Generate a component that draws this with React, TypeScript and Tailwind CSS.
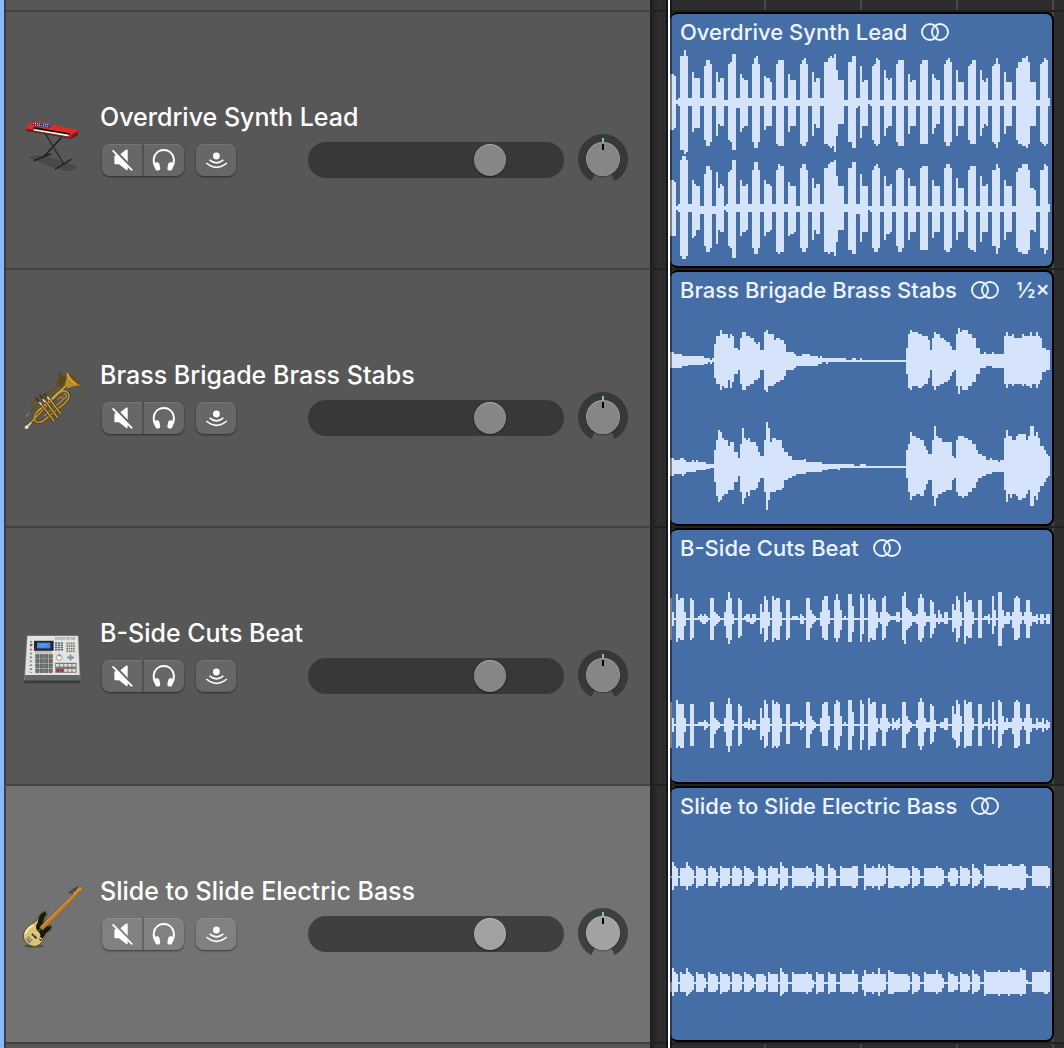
import { useState } from "react";
import type { ReactNode } from "react";

type Channel = { envelope: string; shift?: number };
type Track = {
  name: string;
  art: ReactNode;
  speed?: string;
  selected?: boolean;
  channels: Channel[];
};

/* Envelopes are lists of "column,up,down"; each entry holds until the next one. A column is 2 units wide. */
const SYNTH_L =
  "0,28,28 2,26,26 3,2,2 4,4,4 5,46,48 7,52,52 8,46,50 9,4,4 11,30,30 12,24,26 15,4,4 17,36,38 18,42,44 20,38,40 21,4,4 23,30,34 24,20,22 25,24,24 27,2,4 29,38,38 30,40,40 31,48,48 33,4,6 35,28,30 36,24,26 37,22,24 39,4,4 41,38,40 42,44,46 43,46,46 44,38,40 45,4,4 47,26,28 48,24,24 50,20,24 51,2,4 53,38,42 54,42,44 57,4,4 59,28,30 60,22,24 63,2,4 65,38,42 66,42,44 67,44,44 68,38,40 69,4,4 71,30,34 72,20,22 73,24,26 75,4,4 77,40,42 79,44,44 80,46,46 81,44,44 82,48,50 83,32,34 84,22,22 87,2,4 89,40,40 91,46,46 93,4,6 94,4,4 95,36,36 96,20,24 97,22,24 99,2,2 100,2,4 101,36,38 102,38,42 103,44,44 104,42,42 105,2,4 107,32,34 108,24,26 109,22,24 110,24,24 111,2,4 113,38,40 114,42,44 117,2,4 119,28,32 120,20,24 121,22,24 123,2,4 125,38,42 126,42,42 129,2,4 131,28,32 132,24,26 133,22,22 135,2,4 137,38,40 138,42,44 139,44,44 140,40,40 141,2,4 143,32,34 144,20,24 147,2,4 149,36,38 150,38,42 151,42,42 153,2,4 155,32,34 156,22,26 157,20,22 158,24,24 159,2,4 161,36,40 162,38,42 163,44,46 164,38,40 165,2,4 167,30,32 168,20,24 171,2,4 173,34,38 174,40,42 176,44,44 178,46,46 179,40,42 180,20,24 183,2,4 185,38,40 186,40,42 187,44,44 188,42,42 189,4,4";
const SYNTH_R =
  "0,28,28 2,26,28 3,2,2 4,4,4 5,48,48 6,52,51 8,48,48 9,4,4 11,28,30 12,24,28 13,22,22 15,2,6 17,34,38 18,42,44 20,38,40 21,2,6 23,36,36 24,20,22 25,24,24 26,22,24 27,2,2 28,4,4 29,36,38 30,38,40 31,48,50 33,4,4 35,28,28 36,22,24 38,24,22 39,4,4 41,38,40 42,46,46 44,38,40 45,4,4 47,28,28 48,24,24 50,22,22 51,4,4 53,38,44 54,44,46 55,42,44 57,4,4 59,26,28 60,22,26 62,22,24 63,2,4 65,40,40 66,44,44 68,38,40 69,4,4 71,30,32 72,20,22 73,24,26 75,4,4 77,40,44 79,44,46 80,46,44 82,48,48 83,32,34 84,22,22 87,4,4 89,40,42 91,46,46 93,4,6 95,34,34 96,22,24 99,2,2 100,2,4 101,38,40 102,42,44 103,44,44 104,40,40 105,2,4 107,32,32 108,22,26 110,24,24 111,2,4 113,38,38 114,40,44 116,38,40 117,2,4 119,30,32 120,22,24 123,2,4 125,40,42 126,42,42 129,2,4 131,28,30 132,22,24 135,2,4 137,40,42 138,44,44 140,40,40 141,2,4 143,30,32 144,20,24 147,2,2 148,2,4 149,38,40 150,42,42 152,42,44 153,2,4 155,32,34 156,22,24 158,24,24 159,2,4 161,38,38 163,44,46 164,40,40 165,2,4 167,28,32 168,22,24 171,2,4 173,36,40 174,40,44 176,44,46 179,38,42 180,20,22 182,18,24 183,2,4 185,38,40 187,44,46 188,42,42 189,4,4";
const BRASS_L =
  "0,9,7 2,7,7 6,5,5 9,5,4 17,3,3 19,3,1 20,1,3 21,3,1 22,17,17 23,25,23 25,31,29 26,27,25 27,27,27 29,23,19 30,27,27 31,25,21 32,13,13 34,11,9 35,23,23 36,29,29 38,25,25 40,23,23 42,19,19 43,17,19 44,19,17 45,11,9 47,29,29 48,31,31 49,27,25 52,21,23 53,23,21 55,21,19 57,17,15 58,9,9 62,7,7 63,5,5 66,7,5 70,5,5 74,3,3 75,5,3 76,3,1 78,3,3 79,3,1 88,1,1 91,3,1 93,1,1 95,3,1 96,1,1 118,13,13 119,27,27 120,31,29 121,29,25 124,27,27 126,25,25 127,25,23 129,21,17 130,11,9 131,23,25 132,29,29 133,27,25 135,23,23 137,21,21 138,19,21 139,19,19 140,15,15 141,11,11 142,11,9 143,27,25 144,33,33 145,29,25 146,31,29 149,27,25 151,23,21 153,13,13 155,7,7 157,9,7 158,7,5 161,9,7 162,7,7 167,25,23 168,29,27 169,25,23 171,27,25 172,23,23 176,27,25 177,25,23 178,25,25 180,29,27 181,25,23 183,29,27 184,25,23 185,23,19 186,13,11 188,11,9";
const BRASS_R =
  "0,9,9 2,7,7 5,9,7 6,9,9 7,7,7 8,5,5 11,7,5 12,5,5 13,7,3 14,5,3 17,5,3 18,3,2 20,3,1 22,17,15 23,27,29 24,37,35 25,35,33 26,29,29 27,27,27 29,21,23 30,25,23 32,15,15 34,9,9 35,23,25 36,39,37 37,29,31 38,27,25 39,29,29 40,25,23 43,21,21 44,15,15 45,11,11 47,27,25 48,45,43 49,39,33 50,25,25 51,29,25 53,27,23 55,27,23 56,19,21 57,15,13 59,11,11 61,7,9 63,7,7 67,8,7 68,5,5 76,3,3 79,3,2 84,3,3 85,3,1 92,1,1 95,3,1 98,1,1 118,17,11 119,23,25 120,35,33 121,31,29 123,29,27 125,27,29 127,21,23 128,17,17 129,13,13 131,27,29 132,41,39 133,31,31 134,29,27 136,25,25 138,25,23 141,11,13 142,9,11 143,27,25 144,31,29 146,31,31 147,29,29 149,27,25 151,23,21 153,17,15 154,13,11 156,11,9 158,7,7 160,9,7 161,7,5 164,5,5 165,7,5 167,29,23 168,37,35 169,31,27 170,31,31 171,27,27 173,31,29 174,33,33 176,33,31 178,27,27 179,31,23 180,41,39 182,31,29 183,35,33 184,29,25 185,21,19 187,17,15 188,13,11 189,11,9";
const BEAT_L =
  "0,21,21 1,7,7 2,1,1 3,25,23 4,19,19 5,21,21 7,7,7 8,1,1 10,21,21 11,19,19 12,1,1 14,3,1 15,5,3 16,3,5 17,5,5 18,3,3 19,1,1 20,21,21 22,7,7 23,5,5 24,3,3 25,1,1 27,7,7 28,19,19 29,27,25 30,21,21 31,5,5 32,1,1 34,21,19 35,19,17 36,1,1 37,3,1 38,5,3 40,1,5 41,5,5 42,5,3 43,1,1 45,15,15 46,7,9 47,23,23 48,19,21 49,7,7 50,1,1 51,23,23 52,19,19 53,21,21 55,7,7 56,1,1 58,19,21 59,19,19 60,1,1 61,3,1 64,1,1 65,5,5 66,3,5 67,1,1 68,21,21 70,9,9 71,5,5 72,3,3 73,1,1 75,7,7 76,19,19 77,23,21 79,9,5 80,1,1 82,19,19 83,25,23 84,19,19 85,9,11 86,1,1 87,3,1 88,1,1 89,25,23 91,13,13 92,1,1 95,25,23 96,21,15 97,1,1 99,25,23 100,19,19 101,21,21 102,19,21 103,7,9 104,1,3 105,7,5 106,21,21 107,23,19 108,7,7 109,5,3 110,3,1 113,7,3 115,1,1 116,23,21 117,27,25 118,11,11 119,9,9 120,7,7 121,3,3 123,5,5 124,21,21 125,25,23 126,21,19 127,7,7 128,3,3 130,19,19 131,17,15 132,5,9 133,1,3 134,9,5 135,5,3 136,1,3 137,7,5 139,1,1 141,15,13 142,9,9 143,23,23 144,19,19 145,7,7 146,1,1 147,27,25 148,17,17 149,19,19 151,7,5 152,1,1 154,19,19 156,1,1 157,3,1 159,5,5 160,1,1 161,23,15 162,9,7 163,1,1 164,27,27 166,9,9 167,3,5 168,7,5 170,3,1 171,7,9 172,21,21 173,23,21 174,21,19 175,7,5 176,3,1 177,7,5 178,19,19 180,7,7 181,3,3 183,5,5 184,1,1 185,5,5 187,1,1 188,5,5";
const BEAT_R =
  "0,23,23 1,7,7 2,1,1 3,25,23 4,21,21 5,21,23 7,7,7 8,1,1 10,21,21 12,1,1 14,3,1 17,5,5 18,3,3 19,1,1 20,23,23 22,7,9 23,5,5 24,3,3 25,1,1 27,7,7 28,21,21 29,27,27 30,21,21 31,5,5 32,1,1 34,21,21 35,19,19 36,1,1 37,3,3 39,7,5 40,1,3 41,5,5 43,1,1 45,17,15 46,7,11 47,25,23 48,21,21 49,7,7 50,1,1 51,25,23 52,21,21 53,23,23 54,21,21 55,7,7 56,1,1 58,21,19 60,1,1 61,3,1 64,1,1 65,5,5 66,3,3 67,1,1 68,23,23 70,9,9 71,5,5 72,3,3 73,1,1 75,7,7 76,21,21 77,23,21 79,9,5 80,1,1 82,21,23 83,25,25 84,23,21 85,9,11 86,1,1 87,3,1 88,1,1 89,25,25 91,13,11 92,1,1 95,25,25 96,21,15 97,1,1 99,27,25 100,21,21 101,23,21 103,7,7 104,1,3 105,7,5 106,21,21 108,7,7 109,3,3 110,1,1 111,7,5 112,3,3 113,5,5 114,7,3 115,1,1 116,23,23 118,9,9 119,5,7 120,3,3 121,1,1 123,5,3 124,23,21 125,27,25 126,23,21 127,7,7 128,3,3 130,21,19 131,19,17 132,5,7 133,1,1 135,3,3 137,7,5 139,1,1 141,19,13 142,11,15 143,25,23 144,21,21 145,9,7 146,1,1 147,25,23 148,21,21 149,23,21 151,7,5 152,1,1 154,21,21 156,1,3 157,3,1 159,7,5 160,1,1 161,23,19 162,5,5 163,1,1 164,25,23 165,23,21 166,9,9 167,3,5 168,7,5 169,3,3 171,7,9 172,23,23 173,25,23 174,23,21 175,7,5 176,3,1 177,7,5 178,21,19 180,7,7 181,1,3 183,7,5 184,3,3 186,7,7 187,1,3 188,5,5 189,3,3";
const BASS_L =
  "0,1,1 1,15,13 2,11,9 3,9,9 4,1,1 5,9,9 8,15,13 9,11,9 10,9,9 11,7,7 12,1,1 13,11,11 14,9,9 17,7,7 18,1,1 19,9,9 20,11,9 21,9,9 23,5,5 24,1,1 25,11,11 26,9,9 29,9,7 30,1,1 31,9,9 32,11,9 33,9,9 35,7,7 36,1,1 37,11,9 38,9,9 40,7,7 41,5,5 42,1,1 44,11,9 45,9,9 47,7,7 48,1,1 49,9,9 50,11,9 51,9,9 53,9,7 54,3,1 55,15,13 56,11,11 57,9,9 59,1,1 61,11,11 62,9,9 68,11,11 69,9,9 71,5,5 72,1,1 73,13,11 74,11,9 76,9,9 77,1,1 79,13,11 80,9,9 82,7,9 83,1,1 85,11,9 86,9,9 91,11,11 93,11,9 94,1,1 97,13,13 98,9,9 101,11,11 102,9,9 104,13,13 105,9,9 106,11,9 107,9,7 108,1,1 109,13,11 110,11,11 112,9,9 115,9,11 117,9,9 119,7,7 120,1,1 121,11,11 122,9,9 124,7,7 125,1,1 127,9,9 133,11,11 134,9,9 136,7,7 137,1,1 139,5,5 140,9,9 143,7,7 144,1,1 145,11,9 146,9,9 149,7,7 150,1,1 151,13,11 152,9,9 154,7,7 155,3,3 156,1,1 157,13,11 158,11,9 164,13,13 165,11,11 169,13,13 171,11,11 175,13,13 177,11,11 178,3,1 179,1,1 181,11,9 187,11,9 188,11,11 189,9,9";
const BASS_R =
  "0,1,9 1,15,13 2,11,9 3,9,9 4,1,1 5,11,9 6,9,9 8,15,13 9,11,11 10,9,9 11,7,7 12,1,1 13,11,9 14,9,9 17,5,5 18,1,1 19,11,9 20,9,9 23,7,7 24,1,1 25,11,11 26,9,9 29,7,7 30,1,1 31,11,9 32,9,9 35,7,7 36,1,1 37,11,9 38,9,9 40,7,7 41,5,5 42,1,1 43,9,9 47,7,7 48,1,1 49,11,9 50,9,9 54,1,1 55,15,13 56,11,11 57,9,9 59,1,1 61,11,9 62,9,9 68,11,11 69,9,9 71,3,5 72,1,1 73,11,11 74,9,9 77,1,1 79,11,11 80,9,9 83,1,1 85,11,9 86,9,9 91,13,11 92,9,9 94,1,1 96,7,7 97,13,13 98,9,9 101,11,11 102,9,9 104,15,13 105,9,9 107,9,7 108,1,1 109,13,11 110,11,11 112,9,9 119,7,7 120,1,1 121,11,11 122,9,9 124,7,7 125,1,1 127,11,9 128,9,9 133,13,11 134,9,9 136,5,5 137,1,1 139,11,9 140,9,9 142,7,7 144,1,1 145,11,9 146,9,9 149,7,7 150,1,1 151,13,11 152,9,9 154,7,7 155,1,1 157,13,13 158,11,11 164,13,13 165,11,11 169,13,13 170,11,11 175,15,13 176,13,11 178,3,1 179,1,1 181,11,9 187,13,11 188,11,11 189,11,9";

const COLUMNS = 190;
const MID = 53;

function envelopePath(envelope: string, shift: number) {
  const steps = envelope.split(" ").map((s) => s.split(",").map(Number));
  const mid = MID + shift;
  let top = `M0 ${mid}`;
  const bottom: string[] = [];
  steps.forEach(([col, up, down], i) => {
    const end = i + 1 < steps.length ? steps[i + 1][0] : COLUMNS;
    top += `V${mid - up}H${end * 2}`;
    bottom.unshift(`V${mid + down}H${col * 2}`);
  });
  return top + bottom.join("") + "Z";
}

function Waveform({ envelope, shift = 0 }: Channel) {
  return (
    <svg viewBox="0 0 380 106" className="block h-[106px] w-[380px]" shapeRendering="crispEdges" aria-hidden="true">
      <path d={envelopePath(envelope, shift)} fill="#d5e4fb" />
    </svg>
  );
}

function KeyboardArt() {
  return (
    <svg viewBox="0 0 62 62" className="size-[62px]" aria-hidden="true">
      <path d="M6 45Q18 41 28 45L55 54Q54 60 44 59Q26 55 6 45Z" fill="#464646" opacity=".8" />
      <g fill="none" stroke="#1d1d1d" strokeWidth="1.4" strokeLinecap="round">
        <path d="M23 21L41.5 51.5M39 26L21 45.5M12.5 48.5L28.5 42M33.5 57L49 47.5" />
      </g>
      <path d="M23.5 22L41 50" stroke="#555" strokeWidth=".4" />
      <path d="M3.6 16.2L8.8 10.2L22 10.4L56.6 18.6L56 22.3L49 26L4 18.3Z" fill="#e22a28" />
      <path d="M3.6 16.4L12 17.2L11 19.5L4 18.3Z" fill="#8d2030" />
      <path d="M49 22.8L56.6 18.6L56 22.3L49 26Z" fill="#97110f" />
      <path d="M9 10.5L30 12.2L28 15.6L13 14.4Z" fill="#3a3758" />
      <path d="M11 11.4L19 12M13 13.2L26 14.4M21 12L28 12.9" stroke="#b8c6ee" strokeWidth="1" strokeDasharray="1.2 .8" />
      <path d="M12.4 15L48 21.2L46.8 24.9L10.2 18.2Z" fill="#1a1010" />
      <path d="M12 17L47 22.8L46.5 24.4L10.8 18.2Z" fill="#fafafa" />
      <path d="M4 18.4L49 26.2L56 22.5" stroke="#42100f" strokeWidth=".8" fill="none" />
    </svg>
  );
}

function TrumpetArt() {
  return (
    <svg viewBox="0 0 62 62" className="size-[62px]" aria-hidden="true">
      <g fill="none" stroke="#655021" strokeLinecap="round">
        <path d="M5 45L40 12M11 40Q9 30 17 29L34 17" strokeWidth="1.8" />
        <path d="M14 28L21 37M18 25L25 34M22 24L29 31" strokeWidth="1.6" stroke="#3f331a" />
      </g>
      <path d="M37 1Q37 9 34 15L39 17Q43 12 48 9Q41 7 37 1Z" fill="#5b481d" />
      <path d="M4 46L7 43" stroke="#777" strokeWidth="1.6" strokeLinecap="round" />
      <g fill="none" strokeLinecap="round" strokeLinejoin="round">
        <path d="M46 14L15 42Q11 47 13 51Q16 54 21 51L43 33Q49 27 46 23Q42 19 37 23L6 55.5" stroke="#4f390d" strokeWidth="3" />
        <path d="M46 14L15 42Q11 47 13 51Q16 54 21 51L43 33Q49 27 46 23Q42 19 37 23L6 55.5" stroke="#c0922f" strokeWidth="1.7" />
        <path d="M45 15L17 40M42 23.5Q45 24 44.5 27L22 46" stroke="#ecd07a" strokeWidth=".6" />
        <path d="M34 36L40 30.5Q42 28 40.5 27Q39 26.5 36 29" stroke="#a97c25" strokeWidth="1.3" />
        <path d="M19 34L32 51M23.5 31L35.5 47.5M27.5 29L38.5 43.5" stroke="#4d390f" strokeWidth="3" />
        <path d="M19 34L32 51M23.5 31L35.5 47.5M27.5 29L38.5 43.5" stroke="#c29a40" strokeWidth="1.5" />
        <path d="M17.5 32.5L19 34M21.2 29.6L22.5 31.5M25.7 27.2L27 29" stroke="#dddad0" strokeWidth="1.6" />
      </g>
      <path d="M44.7.6Q45 8 42.5 15.2L46 18.5Q52.5 15.2 59.3 15.8Q50 10 44.7.6Z" fill="#b98a2b" stroke="#6b4c16" strokeWidth=".5" />
      <path d="M44.7.6Q48 10.5 59.3 15.8Q56 9.5 44.7.6Z" fill="#6c4e16" />
      <path d="M45.4 3Q47 10 54 14.4" stroke="#e6c263" strokeWidth="1" fill="none" />
      <path d="M4.8 57.2L8.6 53.2" stroke="#ddd3c2" strokeWidth="1.8" strokeLinecap="round" />
      <circle cx="4.6" cy="57.2" r="1.8" fill="#eee5da" />
    </svg>
  );
}

function SamplerArt() {
  const four = [0, 1, 2, 3];
  return (
    <svg viewBox="0 0 62 62" className="size-[62px]" aria-hidden="true">
      <path d="M2 52.5H58.5V55.5H2Z" fill="#333" opacity=".7" />
      <path d="M5 7.5H56.4L58.5 53.8H2Z" fill="#8c8f8e" />
      <path d="M5.4 8H56L57.4 47H3.2Z" fill="#e3e3df" />
      <path d="M3.2 47H57.4L58.5 53.8H2Z" fill="#626766" />
      <path d="M2.2 53.2H58.3" stroke="#222" strokeWidth="1" />
      <rect x="12" y="12.8" width="19.6" height="10" fill="#25272b" />
      <rect x="15" y="14.6" width="13.4" height="5.8" fill="#3a84ee" />
      <path d="M16.5 16.5H26M16.5 18.4H24" stroke="#75b2ff" strokeWidth=".7" />
      <g fill="#fff" stroke="#8b8b87" strokeWidth=".6">
        {[0, 1, 2, 3, 4].map((i) => (
          <rect key={i} x={13.5 + i * 3.4} y="23.8" width="2.3" height="1.2" />
        ))}
      </g>
      <rect x="13" y="25.8" width="18" height="19.8" fill="#d2d3cf" />
      <g fill="#707474" stroke="#4c5052" strokeWidth=".5">
        {four.map((r) => four.map((c) => <rect key={`${r}${c}`} x={13.8 + c * 4.4} y={26.6 + r * 4.8} width="3.3" height="3.7" />))}
      </g>
      <g fill="#c9c9c5" stroke="#92928e" strokeWidth=".4">
        {four.map((c) => (
          <rect key={c} x={33.5 + c * 5.2} y="9.4" width="3.8" height="2.2" />
        ))}
      </g>
      <g fill="#50648f">
        {four.map((r) => [0, 1, 2].map((c) => <rect key={`${r}${c}`} x={33 + c * 2.9} y={14.4 + r * 2.2} width="2.2" height="1.5" />))}
      </g>
      <g fill="#70736f">
        {four.map((r) => four.map((c) => <rect key={`${r}${c}`} x={44.5 + c * 2.2} y={14.6 + r * 2.6} width="1.5" height="1.7" />))}
      </g>
      <circle cx="37.2" cy="29.6" r="2.8" fill="#fafafa" stroke="#888" strokeWidth=".8" />
      <path d="M37.2 28.6V26.4" stroke="#333" strokeWidth=".8" />
      <path d="M48.5 26.6V32.4M45 29.5H52" stroke="#8792a0" strokeWidth="2" />
      <rect x="33.2" y="34.8" width="21.4" height="10" fill="#777a78" />
      <g fill="#dededb">
        {[0, 1, 2, 3, 4].map((c) => (
          <rect key={c} x={34 + c * 4.1} y="36" width="3.2" height="2.6" />
        ))}
        <rect x="46.3" y="41" width="3.2" height="2.8" />
        <rect x="50.4" y="41" width="3.2" height="2.8" />
        <rect x="42.2" y="41" width="3.2" height="2.8" />
      </g>
      <path d="M34.2 42.4H41.4" stroke="#c72b29" strokeWidth="2.8" strokeDasharray="3.2 .9" />
      <path d="M9 13V45" stroke="#81837e" strokeWidth="2.2" strokeDasharray="1.6 2.3" />
      <rect x="8" y="15.8" width="2.4" height="1.8" fill="#d1322d" />
      <path d="M7 28V45" stroke="#aaa" strokeWidth=".8" strokeDasharray="1 2" />
    </svg>
  );
}

function BassArt() {
  return (
    <svg viewBox="0 0 62 62" className="size-[62px]" aria-hidden="true">
      <ellipse cx="12" cy="60" rx="10" ry="1.6" fill="#333" opacity=".55" />
      <path d="M2 46.5Q5 40 10.5 37.6Q15 36 16.6 31Q18 27 23 25.2Q26 26 24.5 29.5Q21 34 22.5 38Q25 40 29.5 39.4Q31 43 27 46.5Q22.5 50 21 54Q18 60 12.5 60.5Q4 59.5 1.5 52Q1 49 2 46.5Z" fill="#dcc474" stroke="#49391a" strokeWidth=".8" />
      <path d="M3 48Q5.5 42 11 39.5" stroke="#faf0b8" strokeWidth="1.5" fill="none" />
      <path d="M16.8 31.5Q18.5 27 23 25.8Q25.5 27 23.5 30Q20.5 34 22 38.4Q25 41 29 40Q30 43 26 46Q23.5 48 21.8 51L18.8 55Q16.5 54.5 18.3 50.5Q19 47.5 15.5 45Q12.5 40.5 15.5 37Z" fill="#171817" />
      <path d="M17.6 41L20.8 44.2L54.2 10L52.2 7.6Z" fill="#c27f29" stroke="#7a4c15" strokeWidth=".5" />
      <path d="M19.6 40.2L52 8.4" stroke="#e3a94e" strokeWidth=".8" />
      <path d="M50 7.8L58 .8L60.6 1.2Q60.5 3.5 58.5 5L56 6.4L53.4 10.4Z" fill="#d8922f" stroke="#815014" strokeWidth=".5" />
      <path d="M47.4 7.2L49 5.4M50.4 4.8L52 3M53.4 2.8L55.2 1.2M49 5.4L50.5 7M52 3L53.4 4.8" stroke="#393b3c" strokeWidth="1.3" strokeLinecap="round" />
      <path d="M10 48L14.6 52.4" stroke="#333" strokeWidth="2" />
      <path d="M5.2 51.3L9.5 55.3" stroke="#98958b" strokeWidth="4" />
      <path d="M4.5 53.8L8 57" stroke="#4b473c" strokeWidth="1" />
      <path d="M8 53L19 42.5" stroke="#e8e0c6" strokeWidth=".5" />
      <circle cx="18.8" cy="52.6" r="1" fill="#ddd" />
    </svg>
  );
}

function MuteIcon({ knockout }: { knockout: string }) {
  return (
    <svg viewBox="0 0 40 32" className="block h-8 w-10" aria-hidden="true">
      <path d="M12.4 12Q12.4 11.3 13.2 11.3H17L24.3 5.6Q25.7 5 25.7 6.3V25.2Q25.7 26.6 24.3 26L17 20.3H13.2Q12.4 20.3 12.4 19.6Z" fill="#fff" />
      <path d="M11.4 4.9L31.6 25.6" stroke={knockout} strokeWidth="2.6" />
      <path d="M10.6 6.3L30.2 26.4" stroke="#fff" strokeWidth="1.8" />
    </svg>
  );
}

function HeadphonesIcon() {
  return (
    <svg viewBox="0 0 40 32" className="block h-8 w-10" aria-hidden="true">
      <path d="M12.2 24C9.8 20.5 9.4 17 9.8 14.6C10.8 9.2 15 6 19.8 6C24.6 6 28.8 9.2 29.8 14.6C30.2 17 29.8 20.5 27.4 24" fill="none" stroke="#fff" strokeWidth="1.9" />
      <rect x="10.8" y="18.2" width="5" height="8.4" rx="2.4" fill="#fff" transform="rotate(-12 13.3 22.4)" />
      <rect x="23.8" y="18.2" width="5" height="8.4" rx="2.4" fill="#fff" transform="rotate(12 26.3 22.4)" />
    </svg>
  );
}

function MonitorIcon() {
  return (
    <svg viewBox="0 0 40 32" className="block h-8 w-10" aria-hidden="true">
      <circle cx="20.4" cy="12" r="3.4" fill="#fff" />
      <path d="M13.6 15.8Q20.4 21.8 27.4 15.8M10.4 19Q20.4 27.6 30.8 19" fill="none" stroke="#fff" strokeWidth="1.6" />
    </svg>
  );
}

function StereoIcon() {
  return (
    <svg viewBox="0 0 28 18" className="block h-[18px] w-7 shrink-0" role="img" aria-label="Stereo">
      <g fill="none" stroke="#edf4ff" strokeWidth="1.9">
        <circle cx="9" cy="9" r="8" />
        <circle cx="19" cy="9" r="8" />
      </g>
    </svg>
  );
}

function PanKnob({ label, selected }: { label: string; selected?: boolean }) {
  const [pan, setPan] = useState(0);
  return (
    <div className="relative mb-0.5 size-[50px] shrink-0">
      <svg viewBox="0 0 50 50" className="block size-[50px]" aria-hidden="true">
        <path d="M25 25L13.2 47.1A25 25 0 1 1 36.8 47.1Z" fill={selected ? "#3f3f3f" : "#383838"} />
        <circle cx="25" cy="26" r="17.5" fill="#000" opacity=".22" />
        <circle cx="25" cy="25" r="17" fill={selected ? "#b8b8b8" : "#a0a0a0"} />
        <circle cx="25" cy="25.6" r="16.5" fill={selected ? "#a2a2a2" : "#868686"} />
        <path d="M25 4V8" stroke="#73d67b" strokeWidth="2" />
        <path d="M25 10V16" stroke="#000" strokeWidth="2" transform={`rotate(${pan * 2} 25 25)`} />
      </svg>
      <input
        type="range"
        aria-label={label}
        min={-64}
        max={64}
        value={pan}
        onChange={(e) => setPan(Number(e.target.value))}
        className="absolute inset-0 size-full cursor-pointer opacity-0"
      />
    </div>
  );
}

function VolumeSlider({ label, selected }: { label: string; selected?: boolean }) {
  const [volume, setVolume] = useState(94);
  return (
    <input
      type="range"
      aria-label={label}
      min={0}
      max={127}
      value={volume}
      onChange={(e) => setVolume(Number(e.target.value))}
      className={`h-9 w-64 shrink-0 cursor-pointer appearance-none rounded-full [&::-webkit-slider-thumb]:size-8 [&::-webkit-slider-thumb]:appearance-none [&::-webkit-slider-thumb]:rounded-full [&::-webkit-slider-thumb]:shadow-[inset_0_1px_1px_rgba(255,255,255,0.3),0_1px_2px_rgba(0,0,0,0.5)] ${
        selected
          ? "bg-[#3f3f3f] [&::-webkit-slider-thumb]:bg-[#a2a2a2]"
          : "bg-[#383838] [&::-webkit-slider-thumb]:bg-[#868686]"
      }`}
    />
  );
}

function TrackHeader({ track }: { track: Track }) {
  const { name, selected } = track;
  const face = selected
    ? "bg-[#818181] shadow-[inset_0_1px_0_#8f8f8f,0_1px_2px_rgba(0,0,0,0.5)]"
    : "bg-[#676767] shadow-[inset_0_1px_0_#757575,0_1px_2px_rgba(0,0,0,0.5)]";
  return (
    <div
      className={`flex w-[644px] shrink-0 items-start border-t-2 pt-[88px] pr-[22px] pb-[81px] pl-4 ${
        selected ? "border-[#454545] bg-[#727272]" : "border-[#414141] bg-[#575757]"
      }`}
    >
      <div className="mt-3 shrink-0">{track.art}</div>
      <div className="ml-4 flex-1">
        <h2 className="h-[34px] text-[25px] leading-[34px] font-medium whitespace-nowrap text-white">{name}</h2>
        <div className="flex items-center pl-0.5">
          <div className={`flex overflow-hidden rounded-lg ${face}`}>
            <button type="button" aria-label={`Mute ${name}`} className={`border-r-2 ${selected ? "border-[#646464]" : "border-[#505050]"}`}>
              <MuteIcon knockout={selected ? "#818181" : "#676767"} />
            </button>
            <button type="button" aria-label={`Solo ${name}`}>
              <HeadphonesIcon />
            </button>
          </div>
          <button type="button" aria-label={`Input monitoring ${name}`} className={`ml-3 rounded-lg ${face}`}>
            <MonitorIcon />
          </button>
          <div className="ml-auto flex items-center gap-3.5">
            <VolumeSlider label={`Volume ${name}`} selected={selected} />
            <PanKnob label={`Pan ${name}`} selected={selected} />
          </div>
        </div>
      </div>
    </div>
  );
}

function Region({ track }: { track: Track }) {
  return (
    <article className="h-64 w-96 overflow-hidden rounded-lg border-y-2 border-r-2 border-black bg-[#456ea6]">
      <header className="flex h-9 items-center pl-2.5 whitespace-nowrap text-[#edf4ff]">
        <h3 className="text-[22px] leading-9 font-medium">{track.name}</h3>
        <span className="ml-3.5">
          <StereoIcon />
        </span>
        {track.speed && <span className="ml-auto pr-0.5 text-[22px] leading-9 font-medium">{track.speed}</span>}
      </header>
      {track.channels.map((channel, i) => (
        <Waveform key={i} {...channel} />
      ))}
    </article>
  );
}

const TRACKS: Track[] = [
  {
    name: "Overdrive Synth Lead",
    art: <KeyboardArt />,
    channels: [
      { envelope: SYNTH_L, shift: -1 },
      { envelope: SYNTH_R, shift: -1 },
    ],
  },
  {
    name: "Brass Brigade Brass Stabs",
    art: <TrumpetArt />,
    speed: "½×",
    channels: [{ envelope: BRASS_L }, { envelope: BRASS_R }],
  },
  {
    name: "B-Side Cuts Beat",
    art: <SamplerArt />,
    channels: [{ envelope: BEAT_L }, { envelope: BEAT_R }],
  },
  {
    name: "Slide to Slide Electric Bass",
    art: <BassArt />,
    selected: true,
    channels: [{ envelope: BASS_L }, { envelope: BASS_R }],
  },
];

const GUTTER = "w-[18px] shrink-0 bg-linear-to-r from-[#1c1c1c] to-[#2d2d2d] to-40%";
const LANE = "min-w-0 flex-1 bg-[repeating-linear-gradient(to_right,#474747_0_2px,transparent_2px_96px)] pl-0.5";

export default function App() {
  return (
    <main className="relative flex min-h-screen flex-col overflow-hidden border-l-4 border-[#8ab8f8] bg-[#2d2d2d] font-[Inter,sans-serif]">
      <div className="flex h-2.5">
        <div className="w-[646px] shrink-0 border-l-2 border-[#3e3e3e] bg-[#575757]" />
        <div className={GUTTER} />
        <div className={`${LANE} bg-[#2d2d2d]`} />
      </div>
      {TRACKS.map((track) => (
        <section key={track.name} className="flex">
          <div className="w-0.5 shrink-0 bg-[#3e3e3e]" />
          <TrackHeader track={track} />
          <div className={`${GUTTER} border-t-2 border-[#222]`} />
          <div className={`${LANE} border-t-2 border-[#222] ${track.selected ? "bg-[#343434]" : "bg-[#2d2d2d]"}`}>
            <Region track={track} />
          </div>
        </section>
      ))}
      <div className="flex min-h-1.5 flex-1">
        <div className="w-[646px] shrink-0 border-t-2 border-l-2 border-[#3e3e3e] bg-[#575757]" />
        <div className={`${GUTTER} border-t-2 border-[#222]`} />
        <div className={`${LANE} border-t-2 border-[#222] bg-[#2d2d2d]`} />
      </div>
      <div className="pointer-events-none absolute inset-y-0 left-[662px] flex" aria-hidden="true">
        <div className="w-0.5 bg-[#151515]" />
        <div className="w-0.5 bg-white" />
        <div className="w-0.5 bg-black/45" />
      </div>
    </main>
  );
}
